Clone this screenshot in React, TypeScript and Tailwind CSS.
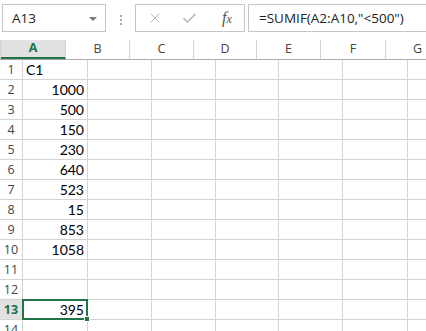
import { Check, X } from 'lucide-react'

const cols = [
  { label: 'A', w: 'w-[65px]' },
  { label: 'B', w: 'w-[64px]' },
  { label: 'C', w: 'w-[64px]' },
  { label: 'D', w: 'w-[63px]' },
  { label: 'E', w: 'w-[64px]' },
  { label: 'F', w: 'w-[65px]' },
  { label: 'G', w: 'w-[64px]' },
]

const values: Record<number, string> = {
  1: 'C1',
  2: '1000',
  3: '500',
  4: '150',
  5: '230',
  6: '640',
  7: '523',
  8: '15',
  9: '853',
  10: '1058',
  13: '395',
}

const rows = Array.from({ length: 14 }, (_, i) => i + 1)

export default function App() {
  return (
    <div className="relative h-[331px] w-[426px] overflow-hidden bg-white font-['Open_Sans',sans-serif] text-[#444]">
      {/* formula bar */}
      <div className="flex h-[40px] items-start pt-[4px]">
        <div className="ml-[2px] flex h-[28px] w-[104px] items-center justify-between border border-[#c6c6c6] pl-[9px] pr-[8px]">
          <span className="text-[13.5px] text-[#222]">A13</span>
          <span className="mt-[1px] h-0 w-0 border-x-[4px] border-t-[4px] border-x-transparent border-t-[#777]" />
        </div>
        <div className="flex w-[29px] flex-col items-center justify-center gap-[2px] self-stretch pb-[5px]">
          <span className="h-[2px] w-[2px] bg-[#aaa]" />
          <span className="h-[2px] w-[2px] bg-[#aaa]" />
          <span className="h-[2px] w-[2px] bg-[#aaa]" />
        </div>
        <div className="flex h-[28px] w-[110px] items-center border border-[#c6c6c6]">
          <X className="ml-[11px] h-[16px] w-[16px] text-[#b5b5b5]" strokeWidth={1.5} />
          <Check className="ml-[18px] h-[17px] w-[17px] text-[#b5b5b5]" strokeWidth={2.2} />
          <span className="ml-[24px] font-['Liberation_Serif',serif] text-[16px] italic text-[#555]">
            f<span className="text-[12px]">x</span>
          </span>
        </div>
        <div className="ml-[3px] flex h-[28px] flex-1 items-center border-y border-l border-[#c6c6c6] pl-[10px]">
          <span className="text-[13.5px] text-[#222]">=SUMIF(A2:A10,"&lt;500")</span>
        </div>
      </div>

      {/* column headers */}
      <div className="flex h-[20px] border-b border-[#ababab] text-[12.5px]">
        <div className="relative w-[23px] border-r border-[#d4d4d4]">
          <span className="absolute bottom-[2px] right-[2px] h-0 w-0 border-b-[13px] border-l-[13px] border-b-[#dcdcdc] border-l-transparent" />
        </div>
        {cols.map((c) => (
          <div
            key={c.label}
            className={`${c.w} flex shrink-0 items-center justify-center border-r border-[#d4d4d4] ${
              c.label === 'A' ? 'border-b-2 border-b-[#217346] bg-[#e1e1e1] font-bold text-[#217346]' : ''
            }`}
          >
            {c.label}
          </div>
        ))}
      </div>

      {/* rows */}
      {rows.map((r) => (
        <div key={r} className="flex h-[20px]">
          <div
            className={`flex w-[23px] shrink-0 items-center justify-center border-r border-b border-[#d4d4d4] pt-[1px] text-[12.5px] ${
              r === 13 ? 'bg-[#e1e1e1] font-bold text-[#217346]' : ''
            }`}
          >
            {r}
          </div>
          {cols.map((c) => (
            <div
              key={c.label}
              className={`${c.w} flex shrink-0 items-end border-r border-b border-[#d4d4d4] px-[3px] pb-[1px] font-['Lato',sans-serif] text-[14px] leading-[17px] text-black ${
                r === 1 ? 'justify-start' : 'justify-end'
              }`}
            >
              {c.label === 'A' ? values[r] ?? '' : ''}
            </div>
          ))}
        </div>
      ))}

      {/* selection on A13 */}
      <div className="absolute left-[22px] top-[299px] h-[21px] w-[66px] border-2 border-[#217346]">
        <span className="absolute -bottom-[4px] -right-[4px] h-[6px] w-[6px] border border-white bg-[#217346]" />
      </div>
    </div>
  )
}
